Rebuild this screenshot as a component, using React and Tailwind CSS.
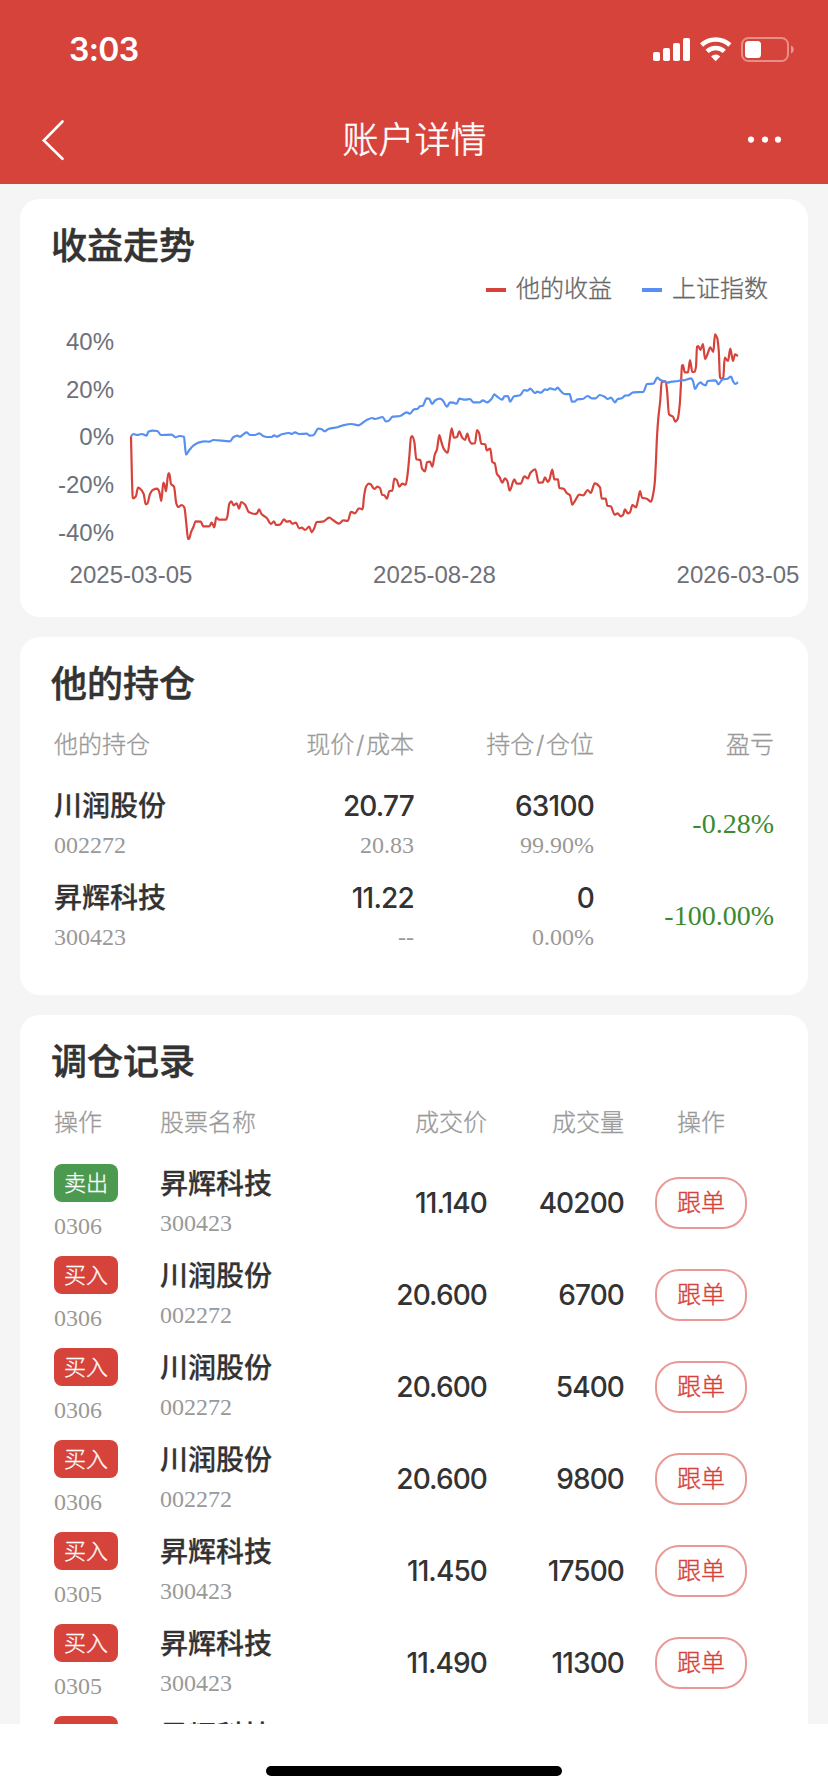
import React from "react";

const holdings = [
  { name: "川润股份", code: "002272", price: "20.77", cost: "20.83", amount: "63100", ratio: "99.90%", profit: "-0.28%" },
  { name: "昇辉科技", code: "300423", price: "11.22", cost: "--", amount: "0", ratio: "0.00%", profit: "-100.00%" },
];

const records = [
  { type: "sell", date: "0306", name: "昇辉科技", code: "300423", price: "11.140", volume: "40200" },
  { type: "buy", date: "0306", name: "川润股份", code: "002272", price: "20.600", volume: "6700" },
  { type: "buy", date: "0306", name: "川润股份", code: "002272", price: "20.600", volume: "5400" },
  { type: "buy", date: "0306", name: "川润股份", code: "002272", price: "20.600", volume: "9800" },
  { type: "buy", date: "0305", name: "昇辉科技", code: "300423", price: "11.450", volume: "17500" },
  { type: "buy", date: "0305", name: "昇辉科技", code: "300423", price: "11.490", volume: "11300" },
  { type: "buy", name: "昇辉科技" },
];

// x,y pairs of both curves
const indexLine =
  "131,436.3 133.3,434 137.3,435 141.7,434 146.7,435.7 148.3,431.7 152.7,430.7 157.3,431 161,435 171.7,434.7 175.7,437.3 179.3,436 184,436.7 184.7,443 186,454.7 189.3,450 193.3,445.7 198.3,442.7 205,441.3 209.3,441.7 213.3,440 230,441.3 233.3,437.3 237.3,435.7 240,436.7 243.3,434.3 246.7,432.3 250,435 255,435 259.3,433.3 262.7,435.7 266.7,437 271.7,437 274.3,435.3 276.7,436.7 281.7,434.3 289.3,433 291.7,434 295,432.3 299,434 306.7,433.7 310,435.7 313.3,435.3 318.3,428.7 321.3,429 324.7,431.3 328.3,429 338.3,427 341.7,425.7 351.7,424 358.3,425.3 366.7,420 372.3,418 375,419 382.7,417 385.7,421.3 388.3,421 392.7,416.7 400,416 406.7,412.3 410,413.7 414,409.3 417.3,409 420,406.3 422.7,405.7 426.7,398.3 429.3,398.7 432,404 435.3,400.3 440,398.7 442.7,400.3 447,406.7 450,402.3 453.3,402.7 456.7,403.7 459.3,398.7 465,399.7 470,399 473.3,402.3 480,402.3 482.7,400.3 487.3,402.3 491.7,398.7 494.3,394.3 497.3,396.7 502.3,399.7 504.3,396.3 508,396 510,401.7 514,396.3 520,395.3 524.3,390 527.3,390.7 530.3,388.7 535,393 537.3,391.7 541,392.7 545,389.3 547.3,390 550,388.3 555,389.7 557.7,387.7 560,390.3 564.3,394 569.7,394.2 572,401.7 575,401.5 577.3,399.3 582.7,399 587.7,396 591.7,398.3 595.7,398.3 599.7,395 605,397 607.7,399 611,397.7 615,402.3 617.7,399 621.7,398.3 625,395.7 628.3,395.3 633.3,392.3 643.3,392 647,384 653.3,383.7 657.3,377.7 660,379.7 664,381.3 667.3,382.7 671.7,381.7 678.3,381 681.7,380 684,380.3 691,378.3 693,381 695,389 698,384.3 700.7,382.3 702.7,384.3 705.7,385.3 707.7,381 715.7,380.3 718.3,384.3 722.7,379.3 726.7,379 731,376.7 733.3,381.7 735.3,384 738,382.3";
const profitLine =
  "131,436.3 132,480 132.7,497.3 133.3,498.3 136,496 138,487.7 140,488.7 143.7,494 145.7,504.3 147.3,503.7 150,494 152.7,490 157.3,488.7 159.3,492 161.3,501 163.3,482.7 164.3,484 166,491.3 168.3,473.3 169.3,473.3 171,484 174,486.7 176.3,503.3 178.3,507 181.7,505 184.3,507.3 186.3,523.3 188,538.7 189,539 191,532.3 193.3,527.3 195.7,521.3 200.7,521.7 203.3,526.3 209.3,526.3 211.7,522.7 214.3,527.3 216.3,517.3 219,519.7 226,519.7 227.3,516.7 229.3,503.7 231.3,501.3 233.7,505.3 236.7,503.3 239,508.7 241.3,502 245.3,505 248.7,512 255,514 257.3,513 259,509.3 261.7,514.3 266.7,518 271,524 274,521.3 276,525 280,524.7 284,519.3 286.7,521.7 290,521 292,523.7 296,522.7 299,528.3 301.7,527.7 305,530 309.3,526.7 311.7,532.3 314.3,528 316.7,522 322.7,521.7 329.3,517.7 333.3,520.3 339,523.7 343.3,520.3 347.7,521 351,511.8 355,513.3 359,508.3 362.7,509.3 364,496.7 366,486.7 368.7,483.7 370.7,484.3 374.3,489 377.3,486.7 380,488 382,494.7 384.3,495.3 387,498.7 389.3,491 392.3,490.7 394.3,478.7 396.7,480 399.3,486.7 402.3,483.7 405.7,484.7 407.7,473.3 409.3,456.7 411,437.3 412.3,436 414.3,441.7 416.3,459.3 420.3,460 422,468.7 425,471.3 427,462.3 430,461.7 432.3,466.7 434.7,455 437,449.3 439.3,435 441.3,441.7 443.7,448.7 447.7,452.7 449.7,440 451.7,428.3 454,437.7 457,437 459.3,431.3 462,437.3 465,440 467.3,433.7 469.7,441.3 471.7,443.7 475,443.3 477,430 479,432.7 481.3,443.7 485.3,444.3 486.7,450.3 490.3,448.7 492.3,462 494.7,463.3 497,474 499.3,476.7 502.3,482.7 505,478.3 507.3,481 509.7,490.7 514.3,479.3 516.7,483.7 520.7,483.7 524.3,476.3 528,478.3 530.3,473 535.3,469.3 538.7,482.7 542.7,482.3 545,477.3 547.7,482 549.3,480 552.3,469.7 554.3,479.3 558,479.3 559.3,488 563.7,488.7 566.7,493 570,495.3 572.3,504.7 575.3,500.3 579.3,494.7 583.3,495.3 587.7,490 590.7,493 594.7,483.3 600,487.3 601.7,498.7 605.7,498.7 607.3,505.7 610.7,506.3 614.7,514.7 617.7,513.3 620.7,516.3 623,515 625,509.3 627.7,513.3 630,512.3 632.3,505 636,507.3 638,500 640,491 642,497.7 646.7,498.7 651,501.7 653,495 654.7,483.3 656,460 657,436.7 658.3,418.3 660.3,400 661.7,381.7 665.7,381.3 667,390 669,414.3 673,416.7 675.3,421.7 677.7,419 679.7,405 681,383.3 682,365.7 683,365 684.7,372.3 688,372.3 690,360 692.3,372 694.7,371.7 696,366.7 697,346.7 698.3,346 700.3,350 703,344 705,359 708,352.7 710.3,347.3 713.3,352 715,334.3 717.3,338.3 718.7,350 720,377.3 721.3,378.7 723.3,377.3 724.7,357.7 728,361 730.3,348.7 733,361 735,354.3 738,356";

// Smooth path that never overshoots between two points
const smoothPath = (line) => {
  const pts = line.split(" ").map((p) => p.split(",").map(Number));
  const slope = (i) => (pts[i + 1][1] - pts[i][1]) / (pts[i + 1][0] - pts[i][0]);
  const tangents = pts.map((_, i) => {
    if (i === 0) return slope(0);
    if (i === pts.length - 1) return slope(i - 1);
    const a = slope(i - 1);
    const b = slope(i);
    return a * b <= 0 ? 0 : (2 * a * b) / (a + b);
  });

  return pts.reduce((d, [x, y], i) => {
    if (i === 0) return `M${x},${y}`;
    const [px, py] = pts[i - 1];
    const h = (x - px) / 3;
    return `${d}C${px + h},${py + tangents[i - 1] * h} ${x - h},${y - tangents[i] * h} ${x},${y}`;
  }, "");
};

const StatusBar = () => (
  <div className="flex h-[96px] items-start justify-between pl-[69px] pr-[34px] pt-[34px]">
    <span className="text-[32px] leading-[32px] font-semibold tracking-[-0.6px]">3:03</span>
    <svg width="142" height="26" viewBox="0 0 142 26" className="mt-[2px]" fill="#fff">
      <rect x="1" y="16" width="7" height="9" rx="1.8" />
      <rect x="11" y="12" width="7" height="13" rx="1.8" />
      <rect x="21" y="7" width="7" height="18" rx="1.8" />
      <rect x="31" y="2" width="7" height="23" rx="1.8" />
      <g fill="none" stroke="#fff" strokeWidth="4.6">
        <path d="M49.5 9A21 21 0 0 1 77.9 9" />
        <path d="M55.1 15.4A12.5 12.5 0 0 1 72.3 15.4" />
      </g>
      <path d="M63.7 25.2l-4.6-4.8a6.4 6.4 0 0 1 9.2 0z" />
      <rect x="90" y="2" width="46" height="23" rx="6.5" fill="none" stroke="#fff" strokeOpacity="0.4" strokeWidth="2" />
      <rect x="93" y="5" width="16" height="17" rx="3.5" />
      <path d="M139 9.5c3.6 1.2 3.6 6.8 0 8z" fillOpacity="0.45" />
    </svg>
  </div>
);

const NavBar = () => (
  <div className="flex h-[88px] items-center justify-between pl-[41px] pr-[46px]">
    <svg width="24" height="42" viewBox="0 0 24 42" fill="none" stroke="#fff" strokeWidth="2.6" strokeLinecap="round">
      <path d="M21.5 2.5L2.8 21.5L21.5 39.8" />
    </svg>
    <h1 className="pl-[18px] text-[36px] leading-[44px] font-light [-webkit-text-stroke:0.5px]">账户详情</h1>
    <svg width="36" height="8" viewBox="0 0 36 8" fill="#fff">
      <circle cx="5" cy="3.6" r="3.1" />
      <circle cx="19" cy="3.6" r="3.1" />
      <circle cx="32" cy="3.6" r="3.1" />
    </svg>
  </div>
);

const CardTitle = ({ children }) => (
  <h2 className="pl-[31px] pt-[27px] text-[36px] leading-[40px] font-medium [-webkit-text-stroke:0.5px]">{children}</h2>
);

const Slash = () => <span className="mx-[1.7px]">/</span>;

const TrendChart = () => (
  <svg
    width="788"
    height="300"
    viewBox="20 317 788 300"
    className="block"
    fill="#6e7079"
    fontFamily='"Liberation Sans", Arial, sans-serif'
    fontSize="24"
  >
    {["40%", "20%", "0%", "-20%", "-40%"].map((label, i) => (
      <text key={label} x="114" y={349.6 + i * 47.9} textAnchor="end">
        {label}
      </text>
    ))}
    {["2025-03-05", "2025-08-28", "2026-03-05"].map((label, i) => (
      <text key={label} x={131 + i * 303.5} y="583" textAnchor="middle">
        {label}
      </text>
    ))}
    <g fill="none" strokeWidth="2.2" strokeLinejoin="round">
      <path d={smoothPath(profitLine)} stroke="#d6433b" />
      <path d={smoothPath(indexLine)} stroke="#5790f3" />
    </g>
  </svg>
);

const App = () => {
  return (
    <div className="flex h-[1792px] w-[828px] flex-col overflow-hidden bg-white font-['Inter','Noto_Sans_CJK_SC',sans-serif] text-[#333]">
      <header className="h-[184px] shrink-0 bg-[#d6433b] text-white">
        <StatusBar />
        <NavBar />
      </header>

      <main className="flex h-[1540px] shrink-0 flex-col gap-5 overflow-hidden bg-[#f5f5f5] px-5 pt-[15px]">
        <section className="h-[418px] shrink-0 rounded-[20px] bg-white">
          <CardTitle>收益走势</CardTitle>
          <div className="flex h-[51px] items-center justify-end pr-[40px] text-[24px] leading-[28px] font-light text-[#666] [-webkit-text-stroke:0.3px]">
            <span className="mr-[10px] h-1 w-5 -translate-y-[2px] bg-[#d6433b]" />
            <span className="mr-[30px] -translate-y-[3px]">他的收益</span>
            <span className="mr-[10px] h-1 w-5 -translate-y-[2px] bg-[#5790f3]" />
            <span className="-translate-y-[3px]">上证指数</span>
          </div>
          <TrendChart />
        </section>

        <section className="h-[358px] shrink-0 rounded-[20px] bg-white">
          <CardTitle>他的持仓</CardTitle>
          <div className="mt-[20px] grid grid-cols-4 px-[34px] text-right text-[24px] leading-[42px] font-light text-[#999] [-webkit-text-stroke:0.3px]">
            <span className="text-left">他的持仓</span>
            <span>现价<Slash />成本</span>
            <span>持仓<Slash />仓位</span>
            <span>盈亏</span>
          </div>
          <div className="mt-[12px]">
            {holdings.map((item) => (
              <div key={item.code} className="grid h-[92px] grid-cols-4 items-center px-[34px] text-right">
                <div className="pt-[3px] text-left">
                  <p className="text-[28px] leading-[40px] font-medium [-webkit-text-stroke:0.25px]">{item.name}</p>
                  <p className="font-['Liberation_Serif',serif] text-[24px] leading-[39px] text-[#999]">{item.code}</p>
                </div>
                <div className="pt-[3px]">
                  <p className="text-[28px] leading-[40px] font-[550] tracking-[-0.8px]">{item.price}</p>
                  <p className="font-['Liberation_Serif',serif] text-[24px] leading-[39px] text-[#999]">{item.cost}</p>
                </div>
                <div className="pt-[3px]">
                  <p className="text-[28px] leading-[40px] font-[550] tracking-[-0.8px]">{item.amount}</p>
                  <p className="font-['Liberation_Serif',serif] text-[24px] leading-[39px] text-[#999]">{item.ratio}</p>
                </div>
                <span className="font-['Liberation_Serif',serif] text-[28px] text-[#3b8a2e]">{item.profit}</span>
              </div>
            ))}
          </div>
        </section>

        <section className="shrink-0 rounded-t-[20px] bg-white">
          <CardTitle>调仓记录</CardTitle>
          <div className="mt-[20px] grid grid-cols-[106px_190px_137px_137px_150px] px-[34px] text-right text-[24px] leading-[42px] font-light text-[#999] [-webkit-text-stroke:0.3px]">
            <span className="text-left">操作</span>
            <span className="text-left">股票名称</span>
            <span>成交价</span>
            <span>成交量</span>
            <span className="pl-1 text-center">操作</span>
          </div>
          <div className="mt-[13px]">
            {records.map((item, index) => (
              <div
                key={index}
                className="grid h-[92px] grid-cols-[106px_190px_137px_137px_150px] items-start px-[34px] text-right text-[28px] leading-[93px] font-[550] tracking-[-0.9px]"
              >
                <div className="pt-[7px] text-left tracking-normal">
                  <span
                    className={`flex h-[38px] w-16 items-center justify-center rounded-lg text-[22px] leading-[37px] font-light text-white [-webkit-text-stroke:0.3px] ${
                      item.type === "sell" ? "bg-[#4b9a4f]" : "bg-[#d6433b]"
                    }`}
                  >
                    {item.type === "sell" ? "卖出" : "买入"}
                  </span>
                  <p className="mt-1 font-['Liberation_Serif',serif] text-[24px] leading-[40px] font-normal text-[#999]">{item.date}</p>
                </div>
                <div className="pt-[7px] text-left tracking-normal">
                  <p className="text-[28px] leading-[40px] font-medium [-webkit-text-stroke:0.25px]">{item.name}</p>
                  <p className="font-['Liberation_Serif',serif] text-[24px] leading-[39px] font-normal text-[#999]">{item.code}</p>
                </div>
                <span>{item.price}</span>
                <span>{item.volume}</span>
                {item.price && (
                  <div className="flex justify-center pl-1 pt-5">
                    <button className="h-[52px] w-[92px] rounded-[24px] border-2 border-[#ea9a96] text-[24px] leading-[48px] font-light tracking-normal text-[#d6433b] [-webkit-text-stroke:0.4px]">
                      跟单
                    </button>
                  </div>
                )}
              </div>
            ))}
          </div>
        </section>
      </main>

      <footer className="flex flex-1 justify-center bg-white pt-[42px]">
        <div className="h-[10px] w-[296px] rounded-full bg-black" />
      </footer>
    </div>
  );
};

export default App;
